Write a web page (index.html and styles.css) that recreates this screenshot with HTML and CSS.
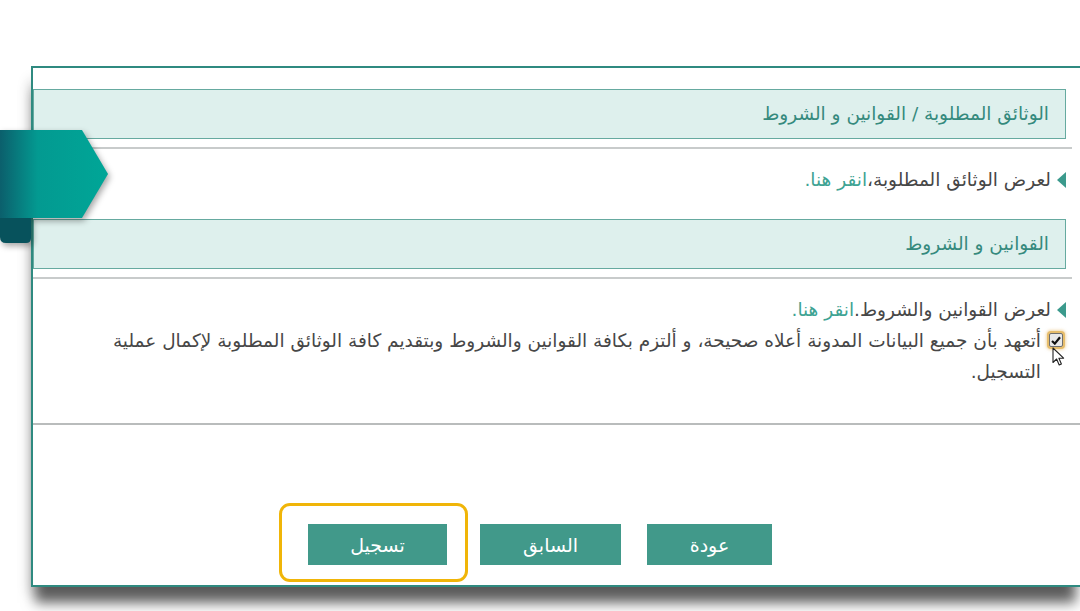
FILE: index.html
```html
<!DOCTYPE html>
<html lang="ar" dir="rtl">
<head>
<meta charset="utf-8">
<title>الوثائق المطلوبة</title>
<link rel="stylesheet" href="styles.css">
</head>
<body>
<div class="stage">
  <svg class="ribbon" width="114" height="120" viewBox="0 0 114 120" aria-hidden="true">
    <defs>
      <linearGradient id="rg" x1="0" y1="0" x2="1" y2="0">
        <stop offset="0" stop-color="#0b5f6c"/>
        <stop offset="0.35" stop-color="#039a91"/>
        <stop offset="1" stop-color="#00a697"/>
      </linearGradient>
    </defs>
    <path d="M0 90 H31 V110 Q31 115 26 115 H6 Q0 115 0 109 Z" fill="#07525c"/>
    <path d="M0 2 H82 L108 46 L82 90 H0 Z" fill="url(#rg)"/>
  </svg>

  <div class="panel">
    <div class="section-head">الوثائق المطلوبة / القوانين و الشروط</div>
    <div class="divider"></div>
    <div class="section-body first">
      <p class="row"><span class="bullet"></span><span>لعرض الوثائق المطلوبة،<a class="link" href="#">انقر هنا.</a></span></p>
    </div>

    <div class="section-head">القوانين و الشروط</div>
    <div class="divider"></div>
    <div class="section-body second">
      <p class="row"><span class="bullet"></span><span>لعرض القوانين والشروط.<a class="link" href="#">انقر هنا.</a></span></p>
      <div class="agree">
        <span class="check">
          <svg width="10" height="9" viewBox="0 0 10 9"><path d="M1 5 L3.8 7.6 L9 1.2" fill="none" stroke="#111" stroke-width="2.2"/></svg>
          <svg class="cursor" width="13" height="20" viewBox="0 0 13 20"><path d="M1 1 L1 15.5 L4.6 12 L7.2 18 L9.4 17 L6.9 11.2 L11.6 11.2 Z" fill="#fff" stroke="#222" stroke-width="1.1" stroke-linejoin="round"/></svg>
        </span>
        <span class="agree-text">أتعهد بأن جميع البيانات المدونة أعلاه صحيحة، و ألتزم بكافة القوانين والشروط وبتقديم كافة الوثائق المطلوبة لإكمال عملية التسجيل.</span>
      </div>
    </div>
    <div class="divider full"></div>

    <div class="actions">
      <button class="btn back" type="button">عودة</button>
      <button class="btn prev" type="button">السابق</button>
      <span class="highlight"><button class="btn submit" type="button">تسجيل</button></span>
    </div>
  </div>
</div>
</body>
</html>
```

FILE: styles.css
```css
html, body {
  margin: 0;
  padding: 0;
  background: #ffffff;
  overflow: hidden;
}

body {
  font-family: "DejaVu Sans", "Noto Sans", sans-serif;
  color: #474747;
  width: 1080px;
  height: 611px;
}

.stage {
  position: relative;
  padding: 66px 0 0 31px;
}

.ribbon {
  position: absolute;
  left: 0;
  top: 128px;
  filter: drop-shadow(2px 3px 3px rgba(0, 0, 0, 0.35));
  z-index: 2;
}

.panel {
  direction: rtl;
  background: #ffffff;
  border-top: 2px solid #2f8a80;
  border-left: 2px solid #2f8a80;
  border-bottom: 2px solid #2f8a80;
  padding: 21px 14px 0 0;
  box-shadow: 0 20px 12px -4px rgba(0, 0, 0, 0.6), -6px 10px 12px -4px rgba(0, 0, 0, 0.15);
}

.section-head {
  height: 48px;
  line-height: 48px;
  border: 1px solid #66aaa0;
  background: #def0ed;
  color: #358a7d;
  font-size: 18.5px;
  padding-right: 16px;
}

.divider {
  height: 2px;
  background: #c8cbcb;
  margin: 8px -6px 0 0;
}

.divider.full {
  margin: 0 -14px 0 0;
  background: #b9bcbc;
}

.section-body.first {
  padding: 15px 0 24px;
  height: 31px;
}

.section-body.second {
  padding: 15px 0 0;
  height: 129px;
}

.row {
  margin: 0;
  display: flex;
  align-items: center;
  gap: 6px;
  font-size: 18.5px;
  height: 31px;
  line-height: 31px;
}

.bullet {
  width: 0;
  height: 0;
  border-top: 8px solid transparent;
  border-bottom: 8px solid transparent;
  border-right: 9px solid #3b9a8d;
}

.link {
  color: #3ea393;
  text-decoration: none;
}

.agree {
  display: flex;
  align-items: flex-start;
  gap: 8px;
  padding-right: 3px;
  font-size: 18.5px;
  line-height: 31px;
}

.check {
  position: relative;
  flex: none;
  width: 12px;
  height: 12px;
  margin-top: 8px;
  border: 1px solid #6f6f6f;
  background: #e9e9e9;
  border-radius: 2px;
  box-shadow: 0 0 0 2px #e6bd6c, 0 0 3px 3px rgba(230, 180, 90, 0.5);
  display: flex;
  align-items: center;
  justify-content: center;
}

.cursor {
  position: absolute;
  top: 13px;
  left: 2px;
}

.agree-text {
  flex: 1;
  padding-left: 54px;
}

.actions {
  display: flex;
  align-items: center;
  padding: 99px 294px 20px 0;
}

.btn {
  font-family: "DejaVu Sans", sans-serif;
  height: 41px;
  border: none;
  background: #41998a;
  color: #ffffff;
  font-size: 19px;
  padding: 0;
  cursor: pointer;
}

.back {
  width: 125px;
}

.prev {
  width: 141px;
  margin-right: 26px;
}

.highlight {
  position: relative;
  margin-right: 33px;
  display: flex;
}

.highlight::after {
  content: "";
  position: absolute;
  left: -29px;
  right: -21px;
  top: -21px;
  bottom: -17px;
  border: 3px solid #f0b508;
  border-radius: 11px;
  pointer-events: none;
}

.submit {
  width: 139px;
}
```
